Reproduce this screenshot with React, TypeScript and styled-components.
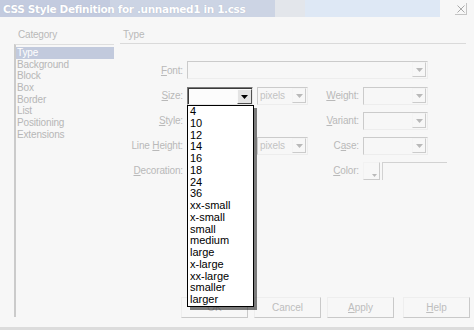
import React from "react";
import styled, { createGlobalStyle } from "styled-components";

const GlobalStyle = createGlobalStyle`
  html, body { margin: 0; padding: 0; background: #f7f7f7; }
  body { width: 474px; height: 330px; overflow: hidden; font-family: "Liberation Sans", Arial, sans-serif; }
  #root { width: 474px; height: 330px; }
`;

const Window = styled.div`
  width: 474px;
  height: 330px;
  box-sizing: border-box;
  display: flex;
  flex-direction: column;
  background: #f7f7f7;
  border-bottom: 3px solid #dcdcdc;
`;

const TitleBar = styled.div`
  display: flex;
  height: 17px;
  flex: none;
`;

const TitleStrip = styled.div`
  width: 440px;
  height: 17px;
  display: flex;
  align-items: center;
  padding-left: 3px;
  box-sizing: border-box;
  background: linear-gradient(
    90deg,
    #c3cbdf 0,
    #c3cbdf 110px,
    #ccd4e4 110px,
    #ccd4e4 275px,
    #e3e6eb 275px,
    #e3e6eb 305px,
    #dee8f5 305px
  );
`;

const TitleText = styled.span`
  font-family: "DejaVu Sans", "Liberation Sans", sans-serif;
  font-weight: bold;
  font-size: 10.5px;
  letter-spacing: -0.35px;
  color: #ffffff;
  text-shadow: 0 0 1px #a8b0c4;
  white-space: nowrap;
`;

const CloseArea = styled.div`
  flex: 1;
  display: flex;
  justify-content: flex-end;
  padding: 3px 7px 0 0;
`;

const CloseButton = styled.div`
  width: 11px;
  height: 11px;
  border-right: 1px solid #c4c4c4;
  border-bottom: 1px solid #c4c4c4;
  display: flex;
  align-items: center;
  justify-content: center;
`;

const Body = styled.div`
  flex: 1;
  display: flex;
  padding: 12px 4px 0 14px;
  gap: 6px;
  min-height: 0;
`;

const Sidebar = styled.div`
  width: 100px;
  display: flex;
  flex-direction: column;
  padding-bottom: 10px;
`;

const SectionLabel = styled.div`
  height: 15px;
  line-height: 12px;
  font-size: 10px;
  letter-spacing: -0.2px;
  color: #b9b9b9;
  padding-left: ${(p: { $indent?: number }) => p.$indent ?? 0}px;
`;

const ListBox = styled.div`
  flex: 1;
  border-top: 1px solid #dedede;
  border-left: 2px solid #cbcbcb;
  padding-top: 2px;
`;

const ListItem = styled.div<{ $selected?: boolean }>`
  height: 11.7px;
  line-height: 11.7px;
  font-size: 10px;
  letter-spacing: -0.15px;
  padding-left: 1px;
  color: ${(p) => (p.$selected ? "#ffffff" : "#b6b6b6")};
  background: ${(p) => (p.$selected ? "#c2cadd" : "transparent")};
  white-space: nowrap;
`;

const Main = styled.div`
  flex: 1;
  display: flex;
  flex-direction: column;
  padding-bottom: 9px;
`;

const PanelHeader = styled.div`
  height: 14px;
  line-height: 12px;
  font-size: 10px;
  color: #b9b9b9;
  padding-left: 3px;
  margin-right: 4px;
  border-bottom: 1px solid #dadada;
`;

const FormGrid = styled.div`
  margin-top: 17px;
  display: grid;
  grid-template-columns: 67px 70px 51px 55px 65px;
  grid-template-rows: 19px 18px 18px 18px 18px;
  row-gap: 7px;
`;

const FieldLabel = styled.div`
  justify-self: end;
  align-self: center;
  padding-right: 4px;
  font-size: 10px;
  letter-spacing: -0.15px;
  color: #b9b9b9;
  white-space: nowrap;
  line-height: 12px;
  u { text-decoration-thickness: 1px; text-underline-offset: 1px; }
`;

const Combo = styled.div<{ $span?: string; $width?: number }>`
  grid-column: ${(p) => p.$span ?? "auto"};
  width: ${(p) => (p.$width ? `${p.$width}px` : "auto")};
  height: 18px;
  box-sizing: border-box;
  display: flex;
  border-style: solid;
  border-width: 1px;
  border-color: #cbcbcb #ededed #ededed #cbcbcb;
  background: #f7f7f7;
`;

const ComboValue = styled.div`
  flex: 1;
  font-size: 10px;
  letter-spacing: -0.1px;
  line-height: 15px;
  padding-left: 2px;
  color: #c3c3c3;
  overflow: hidden;
`;

const ComboButton = styled.div`
  width: 14px;
  box-sizing: border-box;
  border-style: solid;
  border-width: 1px;
  border-color: #f4f4f4 #cbcbcb #cbcbcb #f4f4f4;
  display: flex;
  align-items: center;
  justify-content: center;
  margin: 0 1px 1px 0;
`;

const SizeCell = styled.div`
  position: relative;
  width: 66px;
  z-index: 5;
`;

const ActiveCombo = styled.div`
  height: 18px;
  box-sizing: border-box;
  display: flex;
  border-style: solid;
  border-width: 1px;
  border-color: #7a7a7a #e8e8e8 #e8e8e8 #7a7a7a;
  background: #fcfcfc;
`;

const ActiveInner = styled.div`
  flex: 1;
  display: flex;
  border-top: 1px solid #3a3a3a;
  border-left: 1px solid #3a3a3a;
`;

const ActiveButton = styled.div`
  width: 15px;
  box-sizing: border-box;
  background: #e4e4e4;
  border-style: solid;
  border-width: 1px;
  border-color: #fafafa #505050 #505050 #fafafa;
  display: flex;
  align-items: center;
  justify-content: center;
`;

const DropList = styled.div`
  position: absolute;
  top: 18px;
  left: 0;
  width: 67px;
  box-sizing: border-box;
  border: 1px solid #000;
  background: #ffffff;
  box-shadow: 3px 3px 0 rgba(40, 40, 40, 0.6);
`;

const DropItem = styled.div`
  height: 11.75px;
  line-height: 11.75px;
  font-family: "Liberation Sans Narrow", "Liberation Sans", Arial, sans-serif;
  font-size: 11px;
  padding-left: 2px;
  color: #000;
  white-space: nowrap;
`;

const ColorField = styled.div`
  display: flex;
  gap: 2px;
  width: 84px;
`;

const Swatch = styled.div`
  width: 17px;
  height: 18px;
  box-sizing: border-box;
  border-style: solid;
  border-width: 1px;
  border-color: #f2f2f2 #cbcbcb #cbcbcb #f2f2f2;
  display: flex;
  align-items: flex-end;
  justify-content: flex-end;
  padding: 0 2px 2px 0;
`;

const ColorInput = styled.div`
  flex: 1;
  height: 18px;
  box-sizing: border-box;
  border-top: 1px solid #d2d2d2;
  border-left: 1px solid #d2d2d2;
`;

const ButtonRow = styled.div`
  margin-top: auto;
  display: flex;
  justify-content: flex-end;
  gap: 6px;
`;

const DialogButton = styled.div<{ $separated?: boolean }>`
  width: 67px;
  height: 21px;
  box-sizing: border-box;
  margin-left: ${(p) => (p.$separated ? "3px" : "0")};
  border-style: solid;
  border-width: 1px;
  border-color: #eeeeee #c9c9c9 #c9c9c9 #eeeeee;
  display: flex;
  align-items: center;
  justify-content: center;
  font-size: 10px;
  color: #bdbdbd;
  u { text-decoration-thickness: 1px; text-underline-offset: 1px; }
`;

const Arrow = ({ color }: { color: string }) => (
  <svg width="7" height="4" viewBox="0 0 7 4">
    <polygon points="0,0 7,0 3.5,4" fill={color} />
  </svg>
);

const categories = ["Type", "Background", "Block", "Box", "Border", "List", "Positioning", "Extensions"];
const sizes = [
  "4", "10", "12", "14", "16", "18", "24", "36",
  "xx-small", "x-small", "small", "medium", "large", "x-large", "xx-large", "smaller", "larger",
];

const DisabledCombo = ({ span, width, value }: { span?: string; width?: number; value?: string }) => (
  <Combo $span={span} $width={width}>
    <ComboValue>{value ?? ""}</ComboValue>
    <ComboButton>
      <Arrow color="#b9b9b9" />
    </ComboButton>
  </Combo>
);

export default function App() {
  return (
    <>
      <GlobalStyle />
      <Window>
        <TitleBar>
          <TitleStrip>
            <TitleText>CSS Style Definition for .unnamed1 in 1.css</TitleText>
          </TitleStrip>
          <CloseArea>
            <CloseButton>
              <svg width="8" height="8" viewBox="0 0 8 8">
                <path d="M0.5 0.5 L7.5 7.5 M7.5 0.5 L0.5 7.5" stroke="#a9a9a9" strokeWidth="1" />
              </svg>
            </CloseButton>
          </CloseArea>
        </TitleBar>
        <Body>
          <Sidebar>
            <SectionLabel $indent={4}>Category</SectionLabel>
            <ListBox>
              {categories.map((c, i) => (
                <ListItem key={c} $selected={i === 0}>
                  {c}
                </ListItem>
              ))}
            </ListBox>
          </Sidebar>
          <Main>
            <PanelHeader>Type</PanelHeader>
            <FormGrid>
              <FieldLabel>
                <u>F</u>ont:
              </FieldLabel>
              <DisabledCombo span="2 / 6" />

              <FieldLabel>
                <u>S</u>ize:
              </FieldLabel>
              <SizeCell>
                <ActiveCombo>
                  <ActiveInner>
                    <div style={{ flex: 1 }} />
                    <ActiveButton>
                      <Arrow color="#000" />
                    </ActiveButton>
                  </ActiveInner>
                </ActiveCombo>
                <DropList>
                  {sizes.map((s) => (
                    <DropItem key={s}>{s}</DropItem>
                  ))}
                </DropList>
              </SizeCell>
              <DisabledCombo value="pixels" />
              <FieldLabel>
                <u>W</u>eight:
              </FieldLabel>
              <DisabledCombo />

              <FieldLabel>
                <u>S</u>tyle:
              </FieldLabel>
              <DisabledCombo width={66} />
              <div />
              <FieldLabel>
                <u>V</u>ariant:
              </FieldLabel>
              <DisabledCombo />

              <FieldLabel>
                Line <u>H</u>eight:
              </FieldLabel>
              <DisabledCombo width={66} />
              <DisabledCombo value="pixels" />
              <FieldLabel>
                C<u>a</u>se:
              </FieldLabel>
              <DisabledCombo />

              <FieldLabel>
                <u>D</u>ecoration:
              </FieldLabel>
              <div />
              <div />
              <FieldLabel>
                <u>C</u>olor:
              </FieldLabel>
              <ColorField>
                <Swatch>
                  <svg width="5" height="3" viewBox="0 0 5 3">
                    <polygon points="0,0 5,0 2.5,3" fill="#b9b9b9" />
                  </svg>
                </Swatch>
                <ColorInput />
              </ColorField>
            </FormGrid>
            <ButtonRow>
              <DialogButton>OK</DialogButton>
              <DialogButton>Cancel</DialogButton>
              <DialogButton>
                <u>A</u>pply
              </DialogButton>
              <DialogButton $separated>
                <u>H</u>elp
              </DialogButton>
            </ButtonRow>
          </Main>
        </Body>
      </Window>
    </>
  );
}
